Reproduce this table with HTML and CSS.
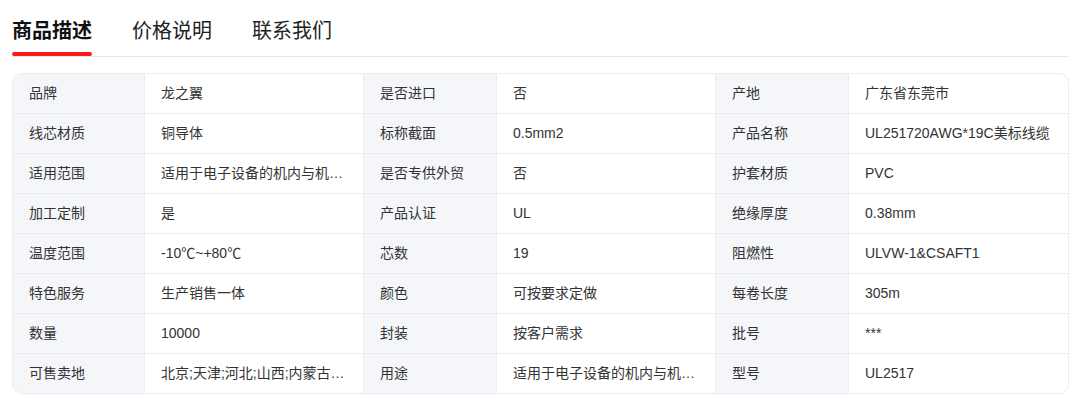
FILE: index.html
```html
<!DOCTYPE html>
<html lang="zh-CN">
<head>
<meta charset="utf-8">
<link rel="stylesheet" href="styles.css">
</head>
<body>
<div class="page">
  <div class="tabs">
    <div class="tab active">商品描述</div>
    <div class="tab">价格说明</div>
    <div class="tab">联系我们</div>
  </div>
  <div class="specs">
    <div class="k">品牌</div><div class="v">龙之翼</div>
    <div class="k">是否进口</div><div class="v">否</div>
    <div class="k">产地</div><div class="v last">广东省东莞市</div>

    <div class="k">线芯材质</div><div class="v">铜导体</div>
    <div class="k">标称截面</div><div class="v">0.5mm2</div>
    <div class="k">产品名称</div><div class="v last">UL251720AWG*19C美标线缆</div>

    <div class="k">适用范围</div><div class="v">适用于电子设备的机内与机…</div>
    <div class="k">是否专供外贸</div><div class="v">否</div>
    <div class="k">护套材质</div><div class="v last">PVC</div>

    <div class="k">加工定制</div><div class="v">是</div>
    <div class="k">产品认证</div><div class="v">UL</div>
    <div class="k">绝缘厚度</div><div class="v last">0.38mm</div>

    <div class="k">温度范围</div><div class="v">-10℃~+80℃</div>
    <div class="k">芯数</div><div class="v">19</div>
    <div class="k">阻燃性</div><div class="v last">ULVW-1&amp;CSAFT1</div>

    <div class="k">特色服务</div><div class="v">生产销售一体</div>
    <div class="k">颜色</div><div class="v">可按要求定做</div>
    <div class="k">每卷长度</div><div class="v last">305m</div>

    <div class="k">数量</div><div class="v">10000</div>
    <div class="k">封装</div><div class="v">按客户需求</div>
    <div class="k">批号</div><div class="v last">***</div>

    <div class="k bottom">可售卖地</div><div class="v bottom">北京;天津;河北;山西;内蒙古…</div>
    <div class="k bottom">用途</div><div class="v bottom">适用于电子设备的机内与机…</div>
    <div class="k bottom">型号</div><div class="v last bottom">UL2517</div>
  </div>
</div>
</body>
</html>
```

FILE: styles.css
```css
html, body {
  margin: 0;
  padding: 0;
  background: #fff;
}

body {
  font-family: "Liberation Sans", "Noto Sans CJK SC", sans-serif;
  color: #333;
}

.page {
  padding: 0 5px 0 12px;
}

.tabs {
  display: flex;
  gap: 40px;
  height: 56px;
  border-bottom: 1px solid #e8e8e8;
}

.tab {
  font-family: "Noto Sans CJK SC", sans-serif;
  font-size: 20px;
  line-height: 20px;
  padding-top: 20px;
  height: 36px;
  box-sizing: border-box;
  color: #222;
  position: relative;
}

.tab.active {
  font-weight: bold;
  color: #111;
}

.tab.active::after {
  content: "";
  position: absolute;
  left: 0;
  right: 0;
  bottom: -20px;
  height: 4px;
  background: #ff1a1a;
  border-radius: 2px;
}

.specs {
  margin-top: 16px;
  display: grid;
  grid-template-columns: 132px 219px 133px 219px 133px 1fr;
  border: 1px solid #ececec;
  border-radius: 10px;
  overflow: hidden;
  font-size: 14px;
}

.k, .v {
  height: 40px;
  line-height: 39px;
  padding: 0 16px;
  box-sizing: border-box;
  white-space: nowrap;
  overflow: hidden;
  border-bottom: 1px solid #ececec;
  border-right: 1px solid #ececec;
}

.k {
  background: #f5f6f9;
  color: #333;
}

.v {
  background: #fff;
  color: #333;
}

.last {
  border-right: none;
}

.bottom {
  border-bottom: none;
  height: 39px;
}
```
